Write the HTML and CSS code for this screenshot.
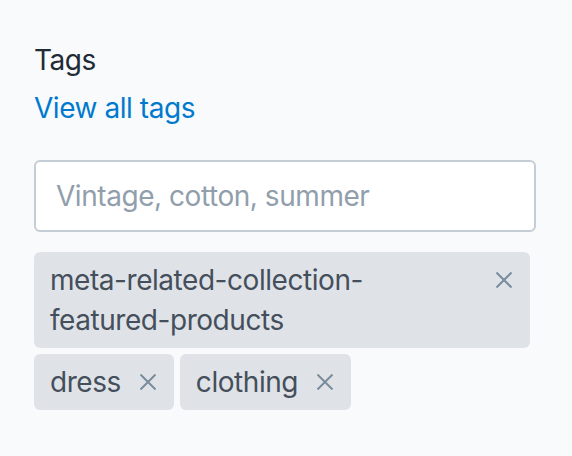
FILE: index.html
```html
<!DOCTYPE html>
<html lang="en">
<head>
<meta charset="utf-8">
<title>Tags</title>
<link rel="stylesheet" href="styles.css">
</head>
<body>
<div class="panel">
  <div class="label">Tags</div>
  <a class="link" href="#">View all tags</a>
  <div class="field">
    <input class="input" type="text" placeholder="Vintage, cotton, summer">
  </div>
  <div class="tags">
    <span class="tag"><span class="tag-text">meta-related-collection-featured-products</span><button class="tag-remove" aria-label="Remove"><svg viewBox="0 0 16 16" width="16" height="16"><path d="M0.5 0.5 L15.5 15.5 M15.5 0.5 L0.5 15.5"/></svg></button></span>
    <span class="tag"><span class="tag-text">dress</span><button class="tag-remove" aria-label="Remove"><svg viewBox="0 0 16 16" width="16" height="16"><path d="M0.5 0.5 L15.5 15.5 M15.5 0.5 L0.5 15.5"/></svg></button></span>
    <span class="tag"><span class="tag-text">clothing</span><button class="tag-remove" aria-label="Remove"><svg viewBox="0 0 16 16" width="16" height="16"><path d="M0.5 0.5 L15.5 15.5 M15.5 0.5 L0.5 15.5"/></svg></button></span>
  </div>
</div>
</body>
</html>
```
FILE: styles.css
```css
html, body {
  margin: 0;
  padding: 0;
  background: #f9fafb;
}
body {
  font-family: Inter, "Noto Sans", sans-serif;
  font-size: 28px;
  line-height: 40px;
  letter-spacing: -0.45px;
  color: #212b36;
}
.panel {
  padding: 40px 36px 20px 34px;
  display: flex;
  flex-direction: column;
  align-items: flex-start;
}
.label {
  color: #212b36;
}
.link {
  color: #007ace;
  text-decoration: none;
  margin-top: 8px;
}
.field {
  margin-top: 32px;
  align-self: stretch;
}
.input {
  display: block;
  box-sizing: border-box;
  width: 100%;
  height: 72px;
  border: 2px solid #c4cdd5;
  border-radius: 6px;
  background: #fff;
  padding: 0 20px;
  font: inherit;
  letter-spacing: inherit;
  color: #212b36;
  outline: none;
}
.input::placeholder {
  color: #919eab;
}
.tags {
  align-self: stretch;
  display: flex;
  flex-wrap: wrap;
  margin-top: 14px;
}
.tag {
  display: inline-flex;
  align-items: flex-start;
  box-sizing: border-box;
  max-width: calc(100% - 6px);
  margin: 6px 6px 0 0;
  padding: 8px 18px 8px 16px;
  background: #dfe3e8;
  border-radius: 6px;
  color: #454f5b;
}
.tag-text {
  flex: 1 1 auto;
  min-width: 0;
}
.tag-remove {
  flex: 0 0 auto;
  margin-left: 19px;
  padding: 0;
  border: 0;
  background: none;
  width: 16px;
  height: 40px;
  display: flex;
  align-items: center;
  justify-content: center;
}
.tag-remove svg {
  display: block;
  stroke: #798c9c;
  stroke-width: 2;
  fill: none;
}
```
